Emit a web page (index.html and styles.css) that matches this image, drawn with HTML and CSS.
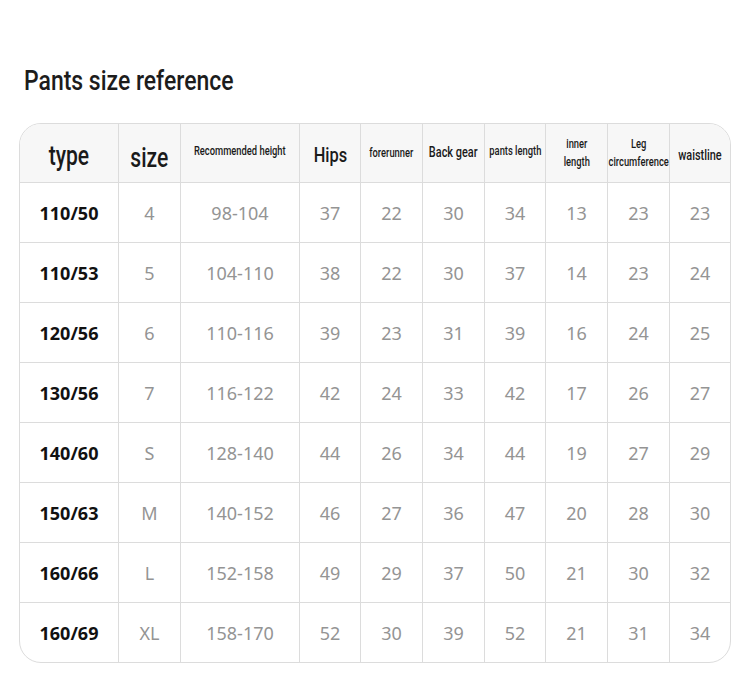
FILE: index.html
```html
<!DOCTYPE html>
<html lang="en">
<head>
<meta charset="utf-8">
<title>Pants size reference</title>
<link rel="stylesheet" href="styles.css">
</head>
<body>
<div class="page">
  <h1 class="title"><span class="title-text">Pants size reference</span></h1>
  <div class="chart">
    <div class="row head">
      <div class="cell"><span class="h h-type">type</span></div>
      <div class="cell"><span class="h h-size">size</span></div>
      <div class="cell"><span class="h h-small h-rec">Recommended height</span></div>
      <div class="cell"><span class="h h-hips">Hips</span></div>
      <div class="cell"><span class="h h-small">forerunner</span></div>
      <div class="cell"><span class="h h-mid h-back">Back gear</span></div>
      <div class="cell"><span class="h h-small h-rec">pants length</span></div>
      <div class="cell"><span class="h h-small">inner<br>length</span></div>
      <div class="cell"><span class="h h-small">Leg<br>circumference</span></div>
      <div class="cell"><span class="h h-mid h-waist">waistline</span></div>
    </div>
    <div class="row">
      <div class="cell strong">110/50</div><div class="cell">4</div><div class="cell">98-104</div><div class="cell">37</div><div class="cell">22</div><div class="cell">30</div><div class="cell">34</div><div class="cell">13</div><div class="cell">23</div><div class="cell">23</div>
    </div>
    <div class="row">
      <div class="cell strong">110/53</div><div class="cell">5</div><div class="cell">104-110</div><div class="cell">38</div><div class="cell">22</div><div class="cell">30</div><div class="cell">37</div><div class="cell">14</div><div class="cell">23</div><div class="cell">24</div>
    </div>
    <div class="row">
      <div class="cell strong">120/56</div><div class="cell">6</div><div class="cell">110-116</div><div class="cell">39</div><div class="cell">23</div><div class="cell">31</div><div class="cell">39</div><div class="cell">16</div><div class="cell">24</div><div class="cell">25</div>
    </div>
    <div class="row">
      <div class="cell strong">130/56</div><div class="cell">7</div><div class="cell">116-122</div><div class="cell">42</div><div class="cell">24</div><div class="cell">33</div><div class="cell">42</div><div class="cell">17</div><div class="cell">26</div><div class="cell">27</div>
    </div>
    <div class="row">
      <div class="cell strong">140/60</div><div class="cell">S</div><div class="cell">128-140</div><div class="cell">44</div><div class="cell">26</div><div class="cell">34</div><div class="cell">44</div><div class="cell">19</div><div class="cell">27</div><div class="cell">29</div>
    </div>
    <div class="row">
      <div class="cell strong">150/63</div><div class="cell">M</div><div class="cell">140-152</div><div class="cell">46</div><div class="cell">27</div><div class="cell">36</div><div class="cell">47</div><div class="cell">20</div><div class="cell">28</div><div class="cell">30</div>
    </div>
    <div class="row">
      <div class="cell strong">160/66</div><div class="cell">L</div><div class="cell">152-158</div><div class="cell">49</div><div class="cell">29</div><div class="cell">37</div><div class="cell">50</div><div class="cell">21</div><div class="cell">30</div><div class="cell">32</div>
    </div>
    <div class="row last">
      <div class="cell strong">160/69</div><div class="cell">XL</div><div class="cell">158-170</div><div class="cell">52</div><div class="cell">30</div><div class="cell">39</div><div class="cell">52</div><div class="cell">21</div><div class="cell">31</div><div class="cell">34</div>
    </div>
  </div>
</div>
</body>
</html>
```

FILE: styles.css
```css
html, body {
  margin: 0;
  padding: 0;
  background: #ffffff;
}

.page {
  padding: 64px 0 0 19px;
}

.title {
  margin: 0 0 25px 0;
  padding-left: 5px;
  height: 34px;
  font-family: Roboto, "Liberation Sans", sans-serif;
  font-weight: 500;
  font-size: 28px;
  line-height: 34px;
  color: #1c1c1c;
}

.title-text {
  display: inline-block;
  white-space: nowrap;
  transform: scaleX(0.82);
  transform-origin: left center;
}

.chart {
  width: 712px;
  box-sizing: border-box;
  border: 1px solid #dcdcdc;
  border-radius: 22px;
  overflow: hidden;
  background: #ffffff;
}

.row {
  display: grid;
  grid-template-columns: 99px 62px 119px 61px 62px 62px 61px 62px 62px 60px;
  height: 60px;
  box-sizing: border-box;
  border-bottom: 1px solid #dcdcdc;
}

.row.head {
  height: 59px;
  background: #f7f7f7;
}

.row.last {
  height: 59px;
  border-bottom: none;
}

.cell {
  box-sizing: border-box;
  display: flex;
  align-items: center;
  justify-content: center;
  border-right: 1px solid #dcdcdc;
  font-family: "Noto Sans", "Open Sans", sans-serif;
  font-size: 18px;
  color: #949494;
  white-space: nowrap;
}

.cell:last-child {
  border-right: none;
}

.cell.strong {
  color: #111111;
  font-weight: 700;
}

.h {
  display: inline-block;
  font-family: Roboto, "Liberation Sans", sans-serif;
  font-weight: 500;
  color: #1a1a1a;
  text-align: center;
  white-space: nowrap;
  transform: scaleX(0.78);
  transform-origin: center center;
  line-height: 18px;
}

.h-type {
  font-size: 27px;
  line-height: 32px;
  padding-top: 5px;
}

.h-size {
  font-size: 27px;
  line-height: 32px;
  padding-top: 10px;
}

.h-hips {
  font-size: 21px;
  line-height: 26px;
  padding-top: 4px;
}

.h-small {
  font-size: 12px;
  line-height: 18px;
}

.h-rec {
  padding-bottom: 5px;
}

.h-mid {
  font-size: 14px;
  line-height: 18px;
}

.h-back {
  padding-bottom: 2px;
}

.h-waist {
  padding-top: 3px;
}
```
